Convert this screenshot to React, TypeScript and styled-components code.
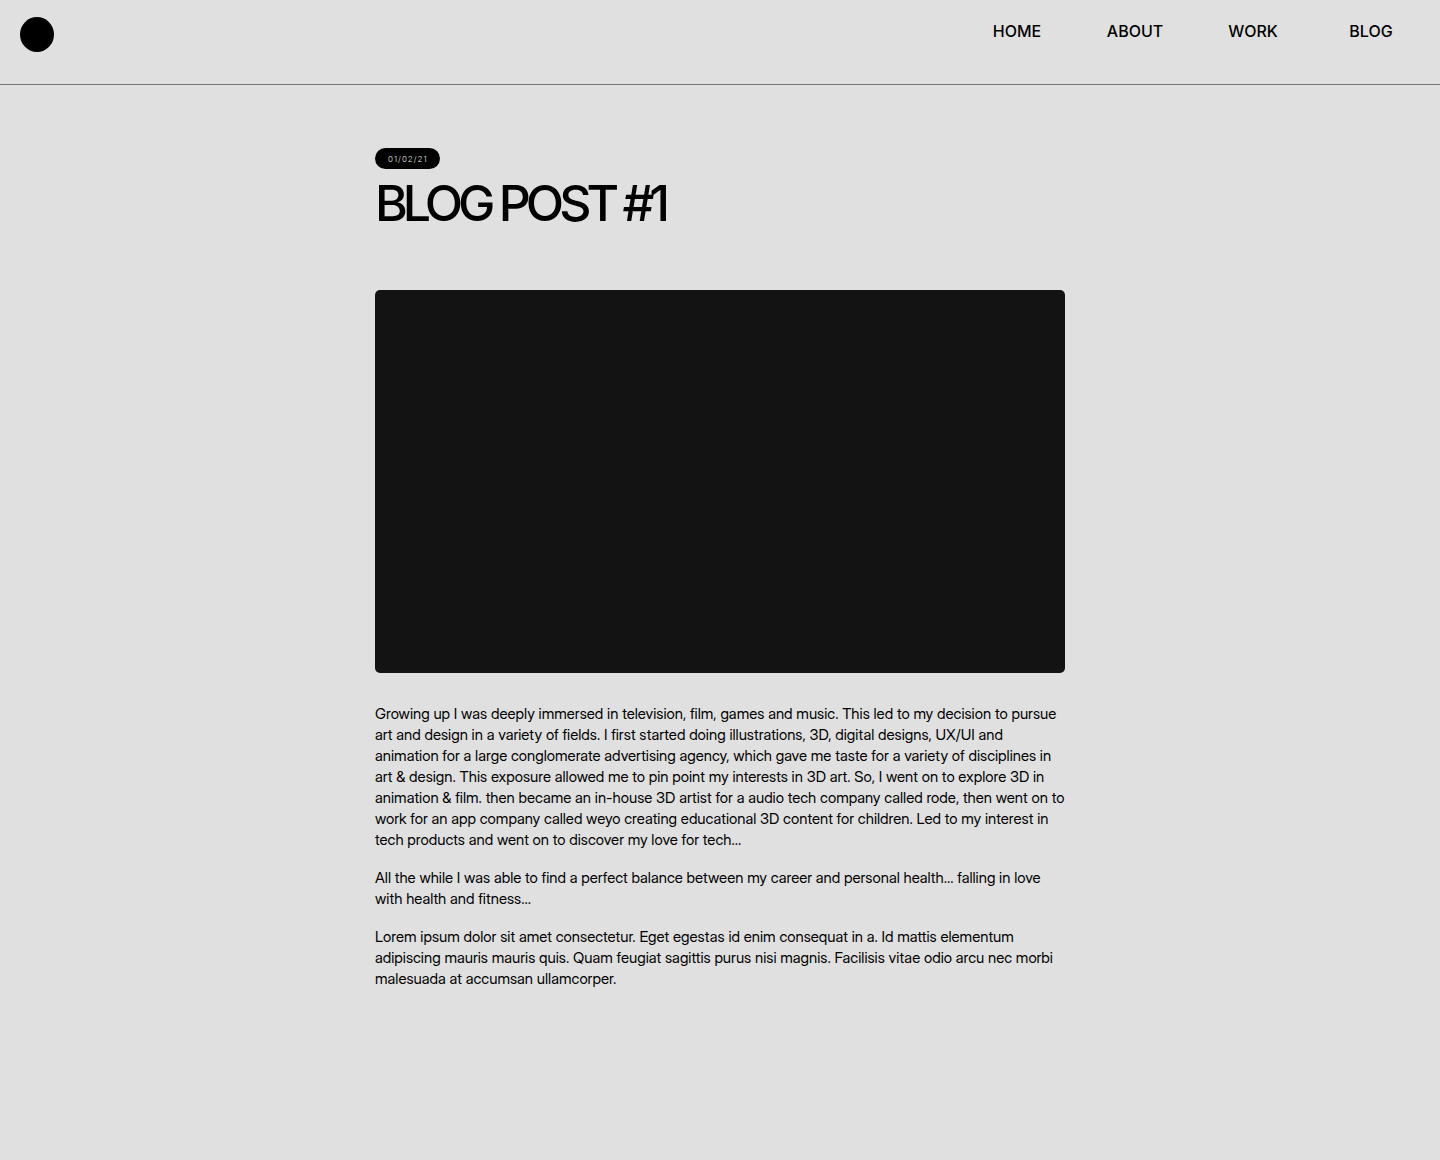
import React from "react";
import styled, { createGlobalStyle } from "styled-components";

const GlobalStyle = createGlobalStyle`
  * { box-sizing: border-box; }
  body {
    margin: 0;
    background: #e0e0e0;
    color: #000;
    font-family: Inter, "Liberation Sans", sans-serif;
  }
`;

const Header = styled.header`
  display: flex;
  justify-content: space-between;
  align-items: flex-start;
  height: 85px;
  padding: 17px 10px 0 20px;
  border-bottom: 1px solid #777;
`;

const Logo = styled.a`
  width: 34px;
  height: 35px;
  border-radius: 50%;
  background: #000;
`;

const Nav = styled.nav`
  display: grid;
  grid-template-columns: repeat(4, 118px);
  padding-top: 4px;
`;

const NavLink = styled.a`
  color: #000;
  font-size: 16px;
  line-height: 20px;
  font-weight: 500;
  text-align: center;
  text-decoration: none;
`;

const Article = styled.article`
  max-width: 690px;
  margin: 0 auto;
  padding: 63px 0 160px;
`;

const DateBadge = styled.time`
  display: block;
  width: fit-content;
  padding: 2px 12px 0 13px;
  border-radius: 11px;
  background: #000;
  color: #e0e0e0;
  font-size: 8px;
  font-weight: 300;
  line-height: 19px;
  letter-spacing: 1px;
`;

const Title = styled.h1`
  margin: 4px 0 56px;
  font-size: 50px;
  line-height: 61px;
  font-weight: 500;
  letter-spacing: -5px;
`;

const Cover = styled.div`
  aspect-ratio: 690 / 383;
  margin-bottom: 30px;
  border-radius: 5px;
  background: #131313;
`;

const Paragraph = styled.p`
  margin: 0 0 17px;
  font-family: "Inter Display", Inter, "Liberation Sans", sans-serif;
  font-size: 15px;
  line-height: 21px;
`;

const links = ["HOME", "ABOUT", "WORK", "BLOG"];

const paragraphs = [
  "Growing up I was deeply immersed in television, film, games and music. This led to my decision to pursue art and design in a variety of fields. I first started doing illustrations, 3D, digital designs, UX/UI and animation for a large conglomerate advertising agency, which gave me taste for a variety of disciplines in art & design. This exposure allowed me to pin point my interests in 3D art. So, I went on to explore 3D in animation & film. then became an in-house 3D artist for a audio tech company called rode, then went on to work for an app company called weyo creating educational 3D content for children. Led to my interest in tech products and went on to discover my love for tech...",
  "All the while I was able to find a perfect balance between my career and personal health... falling in love with health and fitness...",
  "Lorem ipsum dolor sit amet consectetur. Eget egestas id enim consequat in a. Id mattis elementum adipiscing mauris mauris quis. Quam feugiat sagittis purus nisi magnis. Facilisis vitae odio arcu nec morbi malesuada at accumsan ullamcorper.",
];

export default function App() {
  return (
    <>
      <GlobalStyle />
      <Header>
        <Logo href="#" aria-label="Home" />
        <Nav>
          {links.map((label) => (
            <NavLink key={label} href={`#${label.toLowerCase()}`}>{label}</NavLink>
          ))}
        </Nav>
      </Header>
      <main>
        <Article>
          <DateBadge dateTime="2021-02-01">01/02/21</DateBadge>
          <Title>BLOG POST #1</Title>
          <Cover />
          {paragraphs.map((text) => (
            <Paragraph key={text}>{text}</Paragraph>
          ))}
        </Article>
      </main>
    </>
  );
}
